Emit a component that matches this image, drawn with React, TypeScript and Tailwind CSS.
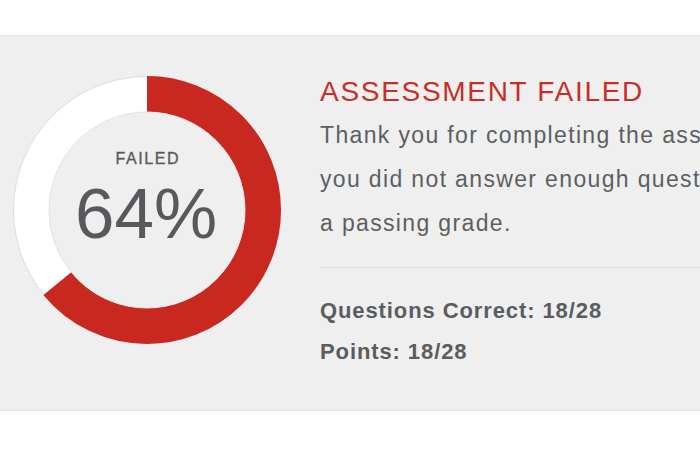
import React from "react";

const RED = "#c8281f";
const PERCENT = 64;

const ScoreRing: React.FC<{ percent: number }> = ({ percent }) => {
  const r = 116;
  const circ = 2 * Math.PI * r;
  return (
    <div className="relative w-[268px] h-[268px] shrink-0">
      <svg width="268" height="268" viewBox="0 0 268 268">
        <circle cx="134" cy="134" r="133.5" fill="#ffffff" stroke="#dddddd" strokeWidth="1" />
        <circle
          cx="134"
          cy="134"
          r={r}
          fill="none"
          stroke={RED}
          strokeWidth="36"
          strokeDasharray={`${(percent / 100) * circ} ${circ}`}
          transform="rotate(-90 134 134)"
        />
        <circle cx="134" cy="134" r="98" fill="#efefef" stroke="#e3e3e3" strokeWidth="1" />
      </svg>
      <div className="absolute inset-0 flex flex-col items-center pt-[75px] text-[#58595c]">
        <span className="text-[16px] leading-[16px] tracking-[1.6px] pl-[1.6px]" style={{ WebkitTextStroke: "0.3px #58595c" }}>
          FAILED
        </span>
        <span className="text-[71px] leading-[71px] mt-[11px] -ml-[2px]">{percent}%</span>
      </div>
    </div>
  );
};

export default function App() {
  return (
    <div
      className="w-[700px] h-[466px] overflow-hidden bg-white"
      style={{ fontFamily: '"Liberation Sans", Arial, sans-serif' }}
    >
      <div className="h-[35px]" />
      <div className="h-[376px] flex border-y border-[#e2e2e2] bg-[#efefef]">
        <div className="pl-[13px] pt-[40px]">
          <ScoreRing percent={PERCENT} />
        </div>
        <div className="flex-1 pl-[39px] pt-[40px] min-w-0">
          <h1 className="text-[28px] leading-[32px] tracking-[1.7px] whitespace-nowrap" style={{ color: "#c62f28" }}>
            ASSESSMENT FAILED
          </h1>
          <p className="mt-[5px] text-[23px] leading-[44px] tracking-[1.35px] text-[#5c5f62] whitespace-nowrap">
            Thank you for completing the assessment. Unfortunately,
            <br />
            you did not answer enough questions correctly to receive
            <br />
            a passing grade.
          </p>
          <div className="mt-[22px] border-t border-[#dcdcdc]" />
          <div className="mt-[22px] text-[22px] leading-[41px] font-bold tracking-[0.9px] text-[#5a5d60] whitespace-nowrap">
            <div>Questions Correct: 18/28</div>
            <div>Points: 18/28</div>
          </div>
        </div>
      </div>
    </div>
  );
}
